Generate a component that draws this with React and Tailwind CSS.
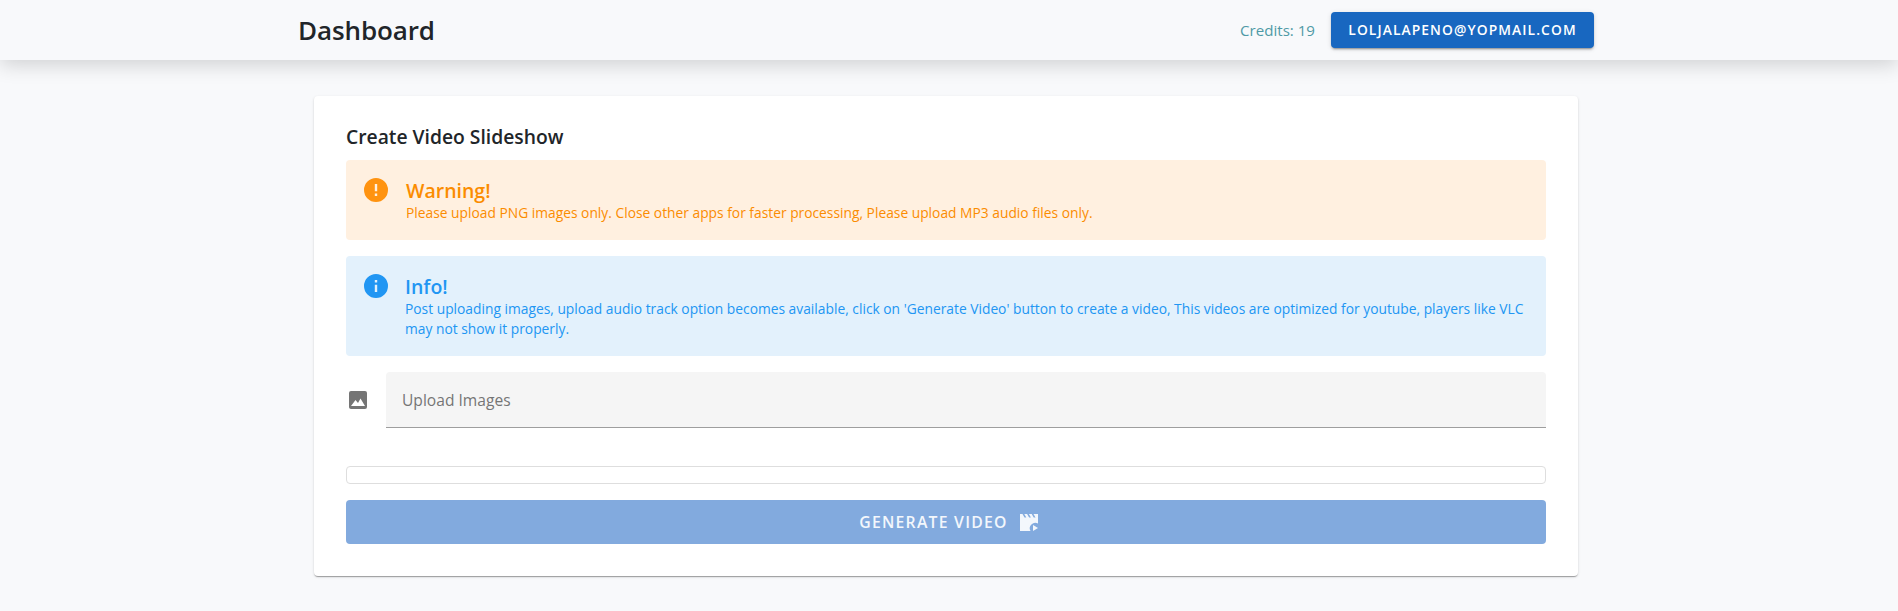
import React from "react";

function App() {
  return (
    <div className="h-[611px] overflow-hidden bg-[#f8f9fb] font-['Open_Sans','Noto_Sans',sans-serif] text-[#212529]">
      <header className="relative h-[60px] bg-[#f8f9fb] shadow-[0_5px_20px_rgba(0,0,0,0.16)]">
        <div className="mx-auto flex h-full w-[1296px] -translate-x-[3px] items-center">
          <h1 className="text-[26px] font-semibold leading-none tracking-[-0.1px] text-[#212529]">Dashboard</h1>
          <div className="ml-auto flex items-center gap-4">
            <span className="text-[15.1px] text-[#4f9aa6]">Credits: 19</span>
            <button className="flex h-9 w-[263px] items-center justify-center rounded bg-[#1867c0] text-[13.8px] font-semibold tracking-[1.1px] text-white shadow-[0_3px_1px_-2px_rgba(0,0,0,0.2),0_2px_2px_0_rgba(0,0,0,0.14),0_1px_5px_0_rgba(0,0,0,0.12)]">
              LOLJALAPENO@YOPMAIL.COM
            </button>
          </div>
        </div>
      </header>

      <main className="mx-auto mt-9 w-[1264px] -translate-x-[3px] rounded bg-white px-8 pb-8 pt-[30px] shadow-[0_2px_1px_-1px_rgba(0,0,0,0.2),0_1px_1px_0_rgba(0,0,0,0.14),0_1px_3px_0_rgba(0,0,0,0.12)]">
        <h2 className="h-[34px] text-[19.3px] font-semibold leading-[22px] text-[#212529]">Create Video Slideshow</h2>

        <div className="flex h-20 rounded bg-[#fff0e0] px-[18px] pt-[18px] text-[#fb8c00]">
          <svg viewBox="2 2 20 20" className="mr-[18px] h-6 w-6 shrink-0" fill="#ff9310">
            <path d="M13 13h-2V7h2m0 10h-2v-2h2m-1-13A10 10 0 0 0 2 12a10 10 0 0 0 10 10 10 10 0 0 0 10-10A10 10 0 0 0 12 2z" />
          </svg>
          <div className="pt-px">
            <div className="text-[19.5px] font-semibold leading-[24px]">Warning!</div>
            <div className="text-[13.8px] leading-[20px]">
              Please upload PNG images only. Close other apps for faster processing, Please upload MP3 audio files only.
            </div>
          </div>
        </div>

        <div className="mt-4 flex h-[100px] rounded bg-[#e3f1fc] px-[18px] pt-[18px] text-[#2196f3]">
          <svg viewBox="2 2 20 20" className="mr-[18px] h-6 w-6 shrink-0" fill="#2196f3">
            <path d="M13 9h-2V7h2m0 10h-2v-6h2m-1-9A10 10 0 0 0 2 12a10 10 0 0 0 10 10 10 10 0 0 0 10-10A10 10 0 0 0 12 2z" />
          </svg>
          <div className="-ml-px">
            <div className="pt-px text-[19.5px] font-semibold leading-[24px]">Info!</div>
            <div className="text-[13.8px] leading-[20px]">
              Post uploading images, upload audio track option becomes available, click on 'Generate Video' button to create a video, This videos are optimized for youtube, players like VLC may not show it properly.
            </div>
          </div>
        </div>

        <div className="mt-4 flex items-center">
          <svg viewBox="0 0 24 24" className="mr-[16px] h-6 w-6 shrink-0" fill="#757575">
            <path d="M21 19V5a2 2 0 0 0-2-2H5a2 2 0 0 0-2 2v14c0 1.1.9 2 2 2h14a2 2 0 0 0 2-2zM5 18l4.500-6 2.500 3 2.500-4.500 4.500 7.500z" fillRule="evenodd" />
          </svg>
          <div className="flex h-14 flex-1 items-center rounded-t border-b border-[#9e9e9e] bg-[#f5f5f5] px-4 pt-[2px] text-[15.6px] text-[#757575]">
            Upload Images
          </div>
        </div>

        <div className="mt-[38px] h-[18px] rounded border border-[#dedede] bg-white" />

        <button className="mt-4 flex h-11 w-full items-center justify-center rounded bg-[#82aade] pl-[5px] text-[15.75px] font-semibold tracking-[1.25px] text-[#f3f7fc]">
          <span className="pt-[2px]">GENERATE VIDEO</span>
          <svg viewBox="0 0 18 17" className="ml-[12px] h-[17px] w-[18px]" fill="#f3f7fc">
            <path d="M0 0h2.500l2 3.500h1.800l-2-3.500h2.800l2 3.500h1.800l-2-3.500h2.800l2 3.500h1.800l-2-3.500H18v9.500a5.500 5.500 0 0 0-7.500 7.500H0z" />
            <path d="M13 11l5 3-5 3z" />
          </svg>
        </button>
      </main>
    </div>
  );
}

export default App;
